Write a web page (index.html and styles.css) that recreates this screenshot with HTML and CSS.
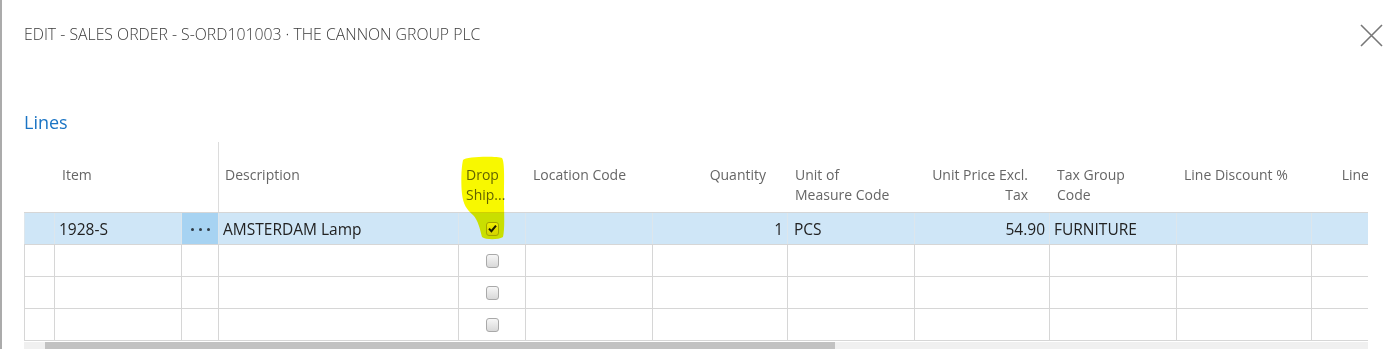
FILE: index.html
```html
<!DOCTYPE html>
<html lang="en">
<head>
<meta charset="utf-8">
<title>Edit - Sales Order</title>
<link rel="stylesheet" href="styles.css">
</head>
<body>
<div class="dialog">
  <div class="titlebar">
    <div class="title">EDIT - SALES ORDER - S-ORD101003 · THE CANNON GROUP PLC</div>
    <button class="close" aria-label="Close">
      <svg width="23" height="23" viewBox="0 0 23 23"><path d="M1 1 L22 22 M22 1 L1 22" stroke="#777" stroke-width="1.6" fill="none"/></svg>
    </button>
  </div>
  <h2 class="section">Lines</h2>
  <div class="gridwrap">
    <div class="grid">
      <div class="row head">
        <div class="c"></div>
        <div class="c">Item</div>
        <div class="c"></div>
        <div class="c divider">Description</div>
        <div class="c">Drop<br>Ship...</div>
        <div class="c">Location Code</div>
        <div class="c r">Quantity</div>
        <div class="c">Unit of<br>Measure Code</div>
        <div class="c r">Unit Price Excl.<br>Tax</div>
        <div class="c">Tax Group<br>Code</div>
        <div class="c">Line Discount %</div>
        <div class="c r">Line Amount<br>Excl. Tax</div>
      </div>
      <div class="row body selected">
        <div class="c"></div>
        <div class="c">1928-S</div>
        <div class="c dots"><span></span><span></span><span></span></div>
        <div class="c">AMSTERDAM Lamp</div>
        <div class="c cb"><span class="box checked"><svg width="11" height="11" viewBox="0 0 11 11"><path d="M2 5.6 L4.4 8.2 L9 2.6" stroke="#1a1a1a" stroke-width="2" fill="none"/></svg></span></div>
        <div class="c"></div>
        <div class="c r">1</div>
        <div class="c uom">PCS</div>
        <div class="c r">54.90</div>
        <div class="c">FURNITURE</div>
        <div class="c"></div>
        <div class="c"></div>
      </div>
      <div class="row body">
        <div class="c"></div><div class="c"></div><div class="c"></div><div class="c"></div>
        <div class="c cb"><span class="box"></span></div>
        <div class="c"></div><div class="c"></div><div class="c"></div><div class="c"></div><div class="c"></div><div class="c"></div><div class="c"></div>
      </div>
      <div class="row body">
        <div class="c"></div><div class="c"></div><div class="c"></div><div class="c"></div>
        <div class="c cb"><span class="box"></span></div>
        <div class="c"></div><div class="c"></div><div class="c"></div><div class="c"></div><div class="c"></div><div class="c"></div><div class="c"></div>
      </div>
      <div class="row body last">
        <div class="c"></div><div class="c"></div><div class="c"></div><div class="c"></div>
        <div class="c cb"><span class="box"></span></div>
        <div class="c"></div><div class="c"></div><div class="c"></div><div class="c"></div><div class="c"></div><div class="c"></div><div class="c"></div>
      </div>
    </div>
  </div>
  <div class="scrollbar"><div class="thumb"></div></div>
  <svg class="highlight" width="50" height="90" viewBox="0 0 50 90">
    <path d="M5,6 C8,2 40,2 44,4 C47,8 46,30 46,45 C46,60 47,75 45,83 C40,86 28,86 24,83 C22,75 20,66 15,61 C9,56 5,50 4,40 C3,30 3,15 5,6 Z" fill="#f8f800"/>
  </svg>
</div>
</body>
</html>
```
FILE: styles.css
```css
html, body {
  margin: 0;
  padding: 0;
  background: #fff;
}
body {
  font-family: "Open Sans", "Noto Sans", "DejaVu Sans", sans-serif;
  overflow: hidden;
}
.dialog {
  position: relative;
  width: 1387px;
  height: 349px;
  border-left: 2px solid #ababab;
  padding-left: 22px;
  box-sizing: border-box;
  overflow: hidden;
}
.titlebar {
  display: flex;
  justify-content: space-between;
  align-items: flex-start;
  padding-top: 24px;
  padding-right: 4px;
}
.title {
  font-size: 15.8px;
  font-weight: 300;
  line-height: 20px;
  color: #3a3a3a;
  letter-spacing: 0;
}
.close {
  border: 0;
  background: none;
  padding: 0;
  margin: 0;
  width: 23px;
  height: 23px;
  cursor: pointer;
}
.close svg { display: block; }
.section {
  margin: 63px 0 8px 0;
  font-size: 18px;
  line-height: 24px;
  font-weight: 400;
  color: #1a74c4;
}
.gridwrap {
  width: 1344px;
  overflow: hidden;
}
.grid {
  width: max-content;
  border-bottom: 1px solid #d6d6d6;
}
.row {
  display: grid;
  grid-template-columns: 30px 127px 37px 240px 67px 127px 135px 127px 135px 127px 135px 135px;
}
.head {
  height: 70px;
}
.head .c {
  padding: 23px 8px 0 8px;
  font-size: 14px;
  line-height: 20px;
  color: #666;
  white-space: nowrap;
  box-sizing: border-box;
}
.head .c.r {
  text-align: right;
  padding-right: 21px;
}
.head .c.divider {
  border-left: 1px solid #dcdcdc;
  padding-left: 6px;
}
.body {
  height: 32px;
  border-top: 1px solid #d6d6d6;
  box-sizing: border-box;
}
.body .c {
  border-left: 1px solid #d6d6d6;
  padding: 0 4px;
  font-size: 15.5px;
  line-height: 32px;
  color: #222;
  white-space: nowrap;
  overflow: hidden;
  box-sizing: border-box;
}
.body .c.r {
  text-align: right;
  padding-right: 4px;
}
.body .c.uom {
  padding-left: 6px;
}
.selected {
  background: #cfe6f7;
}
.selected .c {
  border-left-color: #dde6ec;
}
.body .c.dots {
  background: #a7d3f2;
  display: flex;
  align-items: center;
  justify-content: center;
  gap: 5px;
  padding-top: 2px;
}
.dots span {
  width: 3px;
  height: 3px;
  border-radius: 50%;
  background: #2e3a44;
}
.body .c.cb {
  display: flex;
  align-items: center;
  justify-content: center;
  padding: 0 0 0 1px;
}
.box {
  width: 13px;
  height: 14px;
  border: 1px solid #a9a9a9;
  border-radius: 3px;
  box-sizing: border-box;
  background: linear-gradient(#f6f6f6, #d8d8d8);
  display: flex;
  align-items: center;
  justify-content: center;
}
.box svg { display: block; }
.scrollbar {
  width: 1344px;
  height: 10px;
  margin-top: 1px;
  background: #f0f0f0;
  position: relative;
}
.thumb {
  margin-left: 21px;
  width: 790px;
  height: 10px;
  margin-top: 1px;
  background: #c2c2c2;
}
.highlight {
  position: absolute;
  left: 456px;
  top: 154px;
  mix-blend-mode: multiply;
  pointer-events: none;
}
```
